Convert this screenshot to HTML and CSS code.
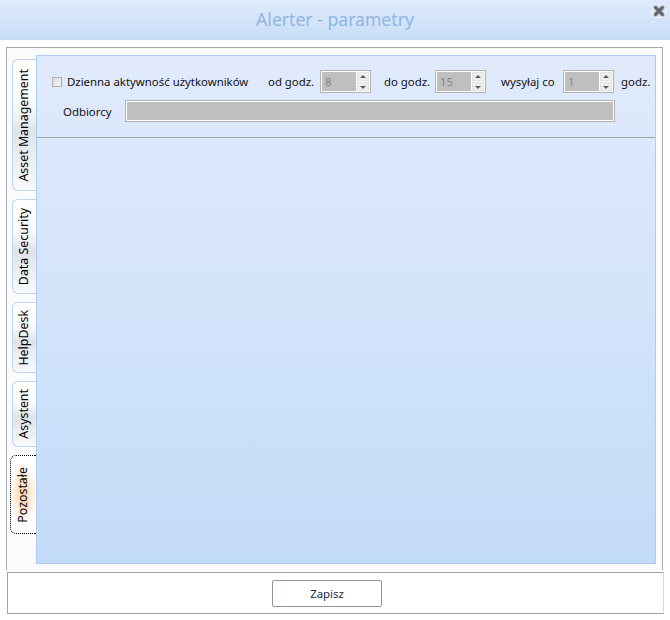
FILE: index.html
```html
<!DOCTYPE html>
<html lang="pl">
<head>
<meta charset="utf-8">
<title>Alerter - parametry</title>
<link rel="stylesheet" href="styles.css">
</head>
<body>
<div class="window">
  <header class="titlebar">
    <h1 class="title">Alerter - parametry</h1>
    <button class="close" aria-label="Zamknij">
      <svg viewBox="0 0 14 14" width="14" height="14">
        <rect x="0.5" y="0.5" width="13" height="13" rx="3" fill="#dbe6f6" stroke="#eef4fc"/>
        <path d="M3.5 3.5 L10.5 10.5 M10.5 3.5 L3.5 10.5" stroke="#b9bec6" stroke-width="4.6" stroke-linecap="round"/>
        <path d="M3.5 3.5 L10.5 10.5 M10.5 3.5 L3.5 10.5" stroke="#62666c" stroke-width="3" stroke-linecap="round"/>
      </svg>
    </button>
  </header>

  <section class="tabpanel">
    <nav class="tabs">
      <div class="tab tab-am"><span class="tab-text">Asset Management</span></div>
      <div class="tab tab-ds"><span class="tab-text">Data Security</span></div>
      <div class="tab tab-hd"><span class="tab-text">HelpDesk</span></div>
      <div class="tab tab-as"><span class="tab-text">Asystent</span></div>
      <div class="tab tab-po active"><span class="tab-text">Pozostałe</span></div>
    </nav>
    <div class="page">
      <div class="page-head">
        <div class="row row1">
          <span class="checkbox"></span>
          <span class="lbl lbl-day">Dzienna aktywność użytkowników</span>
          <span class="lbl lbl-od">od godz.</span>
          <div class="spin"><span class="spin-val">8</span><span class="spin-btns"><span class="sb up"></span><span class="sb down"></span></span></div>
          <span class="lbl lbl-do">do godz.</span>
          <div class="spin"><span class="spin-val">15</span><span class="spin-btns"><span class="sb up"></span><span class="sb down"></span></span></div>
          <span class="lbl lbl-co">wysyłaj co</span>
          <div class="spin"><span class="spin-val">1</span><span class="spin-btns"><span class="sb up"></span><span class="sb down"></span></span></div>
          <span class="lbl lbl-h">godz.</span>
        </div>
        <div class="row row2">
          <span class="lbl lbl-odb">Odbiorcy</span>
          <span class="textbox"></span>
        </div>
      </div>
    </div>
  </section>

  <footer class="footer">
    <button class="btn">Zapisz</button>
  </footer>
</div>
</body>
</html>
```

FILE: styles.css
```css
* { box-sizing: border-box; }
html, body { margin: 0; padding: 0; }
body {
  width: 670px;
  height: 620px;
  background: #ffffff;
  font-family: "Noto Sans", "Open Sans", sans-serif;
  font-size: 11.4px;
  color: #111111;
  overflow: hidden;
}
.window { width: 670px; height: 620px; }

.titlebar {
  position: relative;
  height: 40px;
  background: linear-gradient(to bottom, #dfeafb 0%, #d2e3f9 60%, #c5dcf8 100%);
  display: flex;
  align-items: center;
  justify-content: center;
}
.title {
  margin: 0 0 2px 0;
  font-weight: normal;
  font-size: 17.6px;
  color: #8fb4e6;
}
.close {
  position: absolute;
  top: 4px;
  right: 4px;
  width: 14px;
  height: 14px;
  padding: 0;
  border: 0;
  background: none;
  display: block;
}
.close svg { display: block; }

.tabpanel {
  margin: 7px 0 0 6px;
  width: 657px;
  height: 523px;
  border: 1px solid #a4a9b1;
  border-bottom: 0;
  background: #fafbfd;
  display: flex;
  padding: 7px 6px 0 0;
}
.tabs {
  width: 29px;
  flex: none;
  display: flex;
  flex-direction: column;
  align-items: flex-end;
  padding-top: 4px;
}
.tab {
  width: 24px;
  border: 1px solid #c6d5ea;
  border-right: 0;
  border-radius: 6px 0 0 6px;
  background: linear-gradient(to bottom, #ffffff 0%, #fbfcfd 30%, #eceff3 46%, #dfe3ea 55%, #ebeef2 75%, #f8f9fb 100%);
  display: flex;
  align-items: center;
  justify-content: center;
  margin-bottom: 8px;
  color: #000;
  font-size: 12.4px;
}
.tab-text {
  writing-mode: vertical-rl;
  transform: rotate(180deg);
  white-space: nowrap;
  line-height: 1;
}
.tab-am { height: 132px; }
.tab-ds { height: 95px; }
.tab-hd { height: 71px; }
.tab-as { height: 66px; }
.tab.active {
  width: 26px;
  height: 79px;
  border: 1px dotted #000;
  border-right: 0;
  background: radial-gradient(ellipse 60% 40% at 50% 50%, #fbd9b2 0%, #fde9d3 50%, #fff7ef 80%, #ffffff 100%);
}

.page {
  flex: 1;
  height: 509px;
  border: 1px solid #abcdf4;
  background: linear-gradient(to bottom, #e0eafb 0%, #dae7fb 25%, #cfe2fa 60%, #c2dbf8 100%);
}
.page-head {
  padding: 14px 0 15px 0;
  border-bottom: 1px solid #a0a3a8;
}
.row { display: flex; align-items: center; }
.row1 { padding-left: 15px; height: 23px; }
.row2 { padding-left: 26px; margin-top: 7px; height: 22px; }

.checkbox {
  width: 10px;
  height: 10px;
  border: 1px solid #a9aeb5;
  background: linear-gradient(to bottom right, #d8dbe0, #f3f4f6);
  margin-right: 5px;
  flex: none;
}
.lbl { white-space: nowrap; flex: none; }
.lbl-day { width: 201px; }
.lbl-od { width: 52px; }
.lbl-do { margin-left: 13px; width: 51px; }
.lbl-co { margin-left: 15px; width: 62px; }
.lbl-h { margin-left: 7px; }
.lbl-odb { width: 62px; }

.spin {
  width: 51px;
  height: 23px;
  border: 1px solid #b3b3b3;
  display: flex;
  flex: none;
  background: #fff;
}
.spin-val {
  flex: 1;
  background: #bfbfbf;
  border: 1px solid #ffffff;
  border-right: 0;
  color: #858585;
  padding-left: 3px;
  line-height: 19px;
}
.spin-btns {
  width: 14px;
  display: flex;
  flex-direction: column;
  padding: 1px;
  gap: 1px;
  background: #fff;
}
.sb {
  flex: 1;
  background: #eeeeee;
  border: 1px solid #e2e2e2;
  position: relative;
}
.sb::after {
  content: "";
  position: absolute;
  left: 50%;
  top: 50%;
  margin-left: -3px;
  border-left: 3px solid transparent;
  border-right: 3px solid transparent;
}
.sb.up::after { margin-top: -2px; border-bottom: 3px solid #5a5a5a; }
.sb.down::after { margin-top: -1px; border-top: 3px solid #5a5a5a; }

.textbox {
  width: 490px;
  height: 22px;
  border: 1px solid #b3b3b3;
  box-shadow: inset 0 0 0 1px #ffffff;
  background: #bfbfbf;
}

.footer {
  margin: 2px 0 0 7px;
  width: 657px;
  height: 42px;
  border: 1px solid #a3a3a3;
  border-right-color: #d8d8d8;
  display: flex;
  align-items: center;
}
.btn {
  margin-left: 264px;
  width: 110px;
  height: 27px;
  border: 1px solid #8a94a2;
  border-radius: 2px;
  background: #ffffff;
  font-family: "Noto Sans", "Open Sans", sans-serif;
  font-size: 11.4px;
  color: #1f2b45;
  padding: 0;
}
```
